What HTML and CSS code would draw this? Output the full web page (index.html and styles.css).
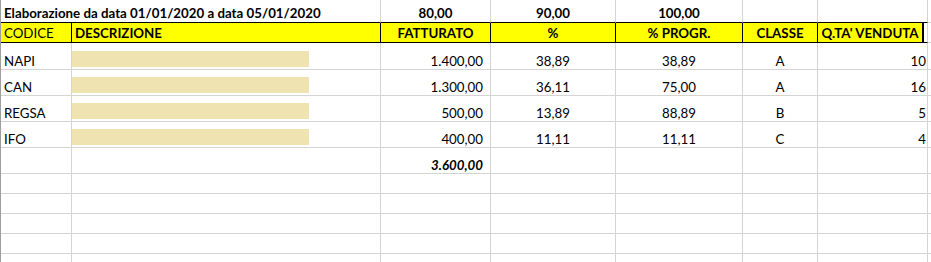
FILE: index.html
```html
<!DOCTYPE html>
<html lang="it">
<head>
<meta charset="utf-8">
<title>Elaborazione</title>
<link rel="stylesheet" href="styles.css">
</head>
<body>
<div class="sheet">
  <div class="c title span2 b">Elaborazione da data 01/01/2020 a data 05/01/2020</div>
  <div class="c title b ctr">80,00</div>
  <div class="c title b ctr">90,00</div>
  <div class="c title b ctr">100,00</div>
  <div class="c title"></div>
  <div class="c title"></div>
  <div class="c"></div>

  <div class="c hd">CODICE</div>
  <div class="c hd b">DESCRIZIONE</div>
  <div class="c hd b ctr">FATTURATO</div>
  <div class="c hd b ctr">%</div>
  <div class="c hd b ctr">% PROGR.</div>
  <div class="c hd b ctr">CLASSE</div>
  <div class="c hd last b"><span class="lastlbl">Q.TA' VENDUTA</span></div>
  <div class="c"></div>

  <div class="c">NAPI</div>
  <div class="c desc"><div class="bar"></div></div>
  <div class="c num">1.400,00</div>
  <div class="c ctr">38,89</div>
  <div class="c ctr">38,89</div>
  <div class="c ctr">A</div>
  <div class="c qty">10</div>
  <div class="c"></div>

  <div class="c">CAN</div>
  <div class="c desc"><div class="bar"></div></div>
  <div class="c num">1.300,00</div>
  <div class="c ctr">36,11</div>
  <div class="c ctr">75,00</div>
  <div class="c ctr">A</div>
  <div class="c qty">16</div>
  <div class="c"></div>

  <div class="c">REGSA</div>
  <div class="c desc"><div class="bar"></div></div>
  <div class="c num">500,00</div>
  <div class="c ctr">13,89</div>
  <div class="c ctr">88,89</div>
  <div class="c ctr">B</div>
  <div class="c qty">5</div>
  <div class="c"></div>

  <div class="c">IFO</div>
  <div class="c desc"><div class="bar"></div></div>
  <div class="c num">400,00</div>
  <div class="c ctr">11,11</div>
  <div class="c ctr">11,11</div>
  <div class="c ctr">C</div>
  <div class="c qty">4</div>
  <div class="c"></div>

  <div class="c"></div>
  <div class="c"></div>
  <div class="c num total">3.600,00</div>
  <div class="c"></div>
  <div class="c"></div>
  <div class="c"></div>
  <div class="c"></div>
  <div class="c"></div>

  <div class="c"></div><div class="c"></div><div class="c"></div><div class="c"></div><div class="c"></div><div class="c"></div><div class="c"></div><div class="c"></div>
  <div class="c"></div><div class="c"></div><div class="c"></div><div class="c"></div><div class="c"></div><div class="c"></div><div class="c"></div><div class="c"></div>
  <div class="c"></div><div class="c"></div><div class="c"></div><div class="c"></div><div class="c"></div><div class="c"></div><div class="c"></div><div class="c"></div>
  <div class="c"></div><div class="c"></div><div class="c"></div><div class="c"></div><div class="c"></div><div class="c"></div><div class="c"></div><div class="c"></div>
  <div class="c"></div><div class="c"></div><div class="c"></div><div class="c"></div><div class="c"></div><div class="c"></div><div class="c"></div><div class="c"></div>
</div>
</body>
</html>
```

FILE: styles.css
```css
html, body {
  margin: 0;
  padding: 0;
  background: #fff;
}
body {
  width: 931px;
  height: 262px;
  overflow: hidden;
}
.sheet {
  display: grid;
  grid-template-columns: 71px 309px 110px 125px 127px 75px 110px 1fr;
  grid-template-rows: 23px 20px 27px 26px 26px 26px 26px 20px 20px 20px 20px 20px;
  border-left: 1px solid #9e9e9e;
  font-family: Lato, "Open Sans", sans-serif;
  font-size: 13.3px;
  color: #000;
}
.c {
  box-sizing: border-box;
  border-right: 1px solid #d4d4d4;
  border-bottom: 1px solid #d4d4d4;
  padding: 0 3px 0 3px;
  display: flex;
  align-items: flex-end;
  line-height: 16px;
  white-space: nowrap;
  overflow: hidden;
}
.title {
  border-bottom-color: #000;
  padding-bottom: 1px;
}
.span2 {
  grid-column: span 2;
}
.b {
  font-weight: 700;
}
.ctr {
  justify-content: center;
}
.hd {
  background: #ffff00;
  border-right-color: #000;
  border-bottom-color: #000;
  padding-bottom: 1px;
}
.hd.last {
  border-right-color: #d4d4d4;
  padding-left: 0;
  padding-right: 0;
  background: linear-gradient(to right, #ffff00 0 104px, #000 104px 106px, #fff 106px);
}
.lastlbl {
  width: 104px;
  text-align: center;
}
.num {
  justify-content: flex-end;
  padding-right: 7px;
}
.qty {
  justify-content: flex-end;
  padding-right: 1px;
}
.total {
  font-style: italic;
  font-weight: 700;
}
.desc {
  padding: 0 0 2px 0;
}
.bar {
  width: 237px;
  height: 16px;
  background: #efe3b1;
}
```
